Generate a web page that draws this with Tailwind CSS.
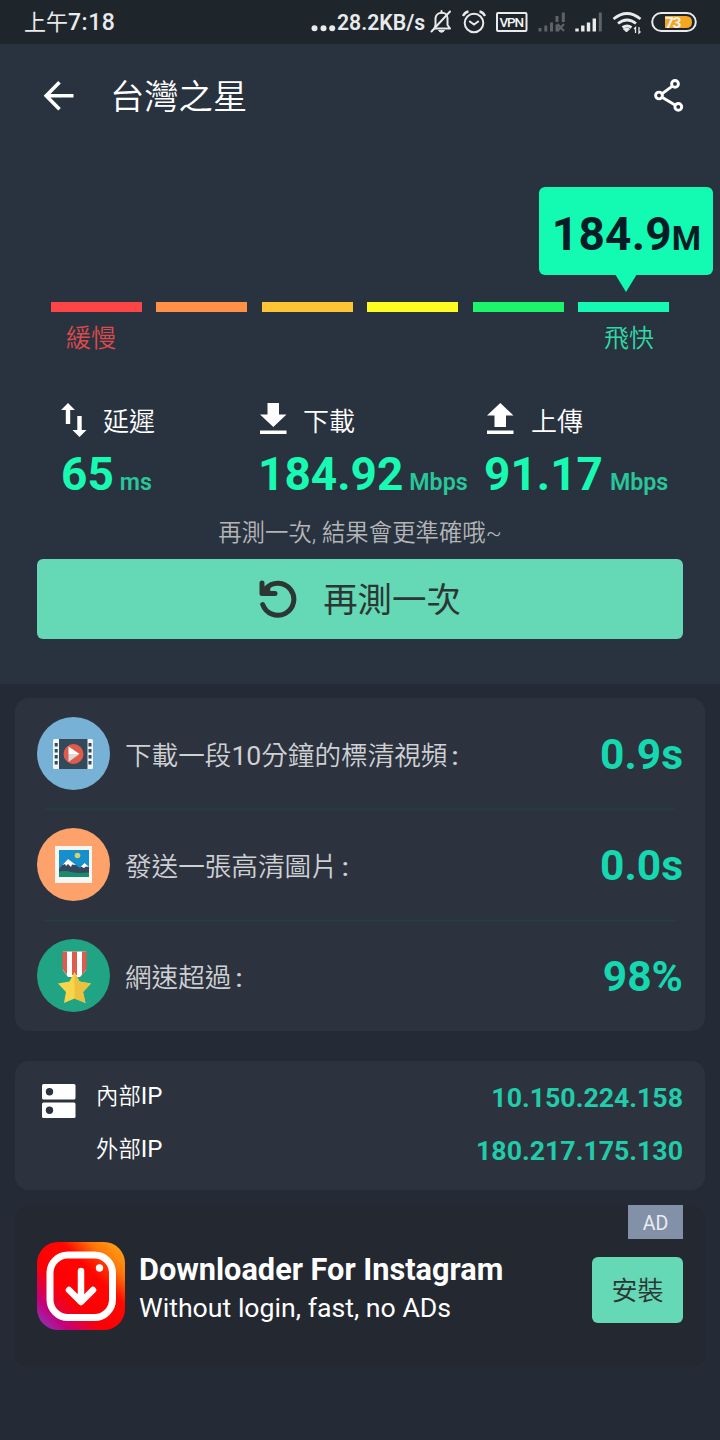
<!DOCTYPE html>
<html lang="zh-Hant">
<head>
<meta charset="utf-8">
<meta name="viewport" content="width=720">
<title>台灣之星</title>
<script src="https://cdn.jsdelivr.net/npm/@tailwindcss/browser@4"></script>
</head>
<body class="bg-[#252b36] font-['Roboto','Noto_Sans_CJK_TC',sans-serif] text-white">
<div class="flex h-[1440px] w-[720px] flex-col overflow-hidden whitespace-nowrap bg-[#252b36]">

  <!-- status bar -->
  <header class="flex h-11 shrink-0 items-center bg-[#1e252b] pl-6 text-[#e8eaeb]">
    <div class="flex h-11 items-center pt-[2px] text-[23px] font-medium leading-[44px]"><span class="text-[22px] font-normal">上午</span><span class="tracking-[0.5px]">7:18</span></div>
    <svg class="ml-auto" width="26" height="44" viewBox="0 0 26 44" fill="#e8eaeb"><circle cx="3.500" cy="28.300" r="3"/><circle cx="12.500" cy="28.300" r="3"/><circle cx="21.200" cy="28.300" r="3"/></svg>
    <span class="w-[88px] pt-[2px] text-[21.200px] font-[600] leading-[44px]">28.2KB/s</span>
    <svg width="295" height="44" viewBox="425 0 295 44" fill="none" stroke="#e8eaeb" stroke-width="2">
      <path d="M434.500 28.500h15.500l-2.500-3.500v-7c0-7-11-7-12 0v7z" stroke-linejoin="round"/><path d="M441.500 11v2M431.500 31.500l18.500-20" stroke-linecap="round"/><path d="M438.500 30.500h6q-3 3.500-6 0z" fill="#e8eaeb" stroke-width="1"/>
      <circle cx="474" cy="23" r="9.300"/><path d="M469.800 21.500l4.200 3 4.200-3" stroke-linecap="round"/><path d="M463 16q2-4 5.500-4.500M485 16q-2-4-5.500-4.500" stroke-width="2.300"/>
      <rect x="497" y="13" width="29.500" height="18" rx="1"/>
      <g stroke="#5d6367" stroke-width="3"><path d="M540 31.500v-3.500M545.800 31.500v-6M551.500 31.500v-9M557 31.500v-7M557 22v-6M563.300 22v-9.500"/><path d="M557.500 24l6.500 7M564 24l-6.500 7" stroke-width="2"/></g>
      <path d="M577 31.500v-3M582.800 31.500v-6M588.500 31.500v-9M594.300 31.500v-13" stroke-width="3.400"/><path d="M600.300 31.500v-19" stroke="#5d6367" stroke-width="3"/>
      <g stroke-width="2.800"><path d="M613.500 19q13.500-11 27 0M618 23.500q9-7 18 0M622.500 27.500q4.500-3 9 0"/></g><path d="M623.500 29q3-2 6 0l-3 3z" fill="#e8eaeb" stroke-width="1"/><path d="M635.500 33v-5.500l-1.500 1.500M639 27v6l1.500-1.500" stroke-width="1.300"/>
      <rect x="652.200" y="13" width="43.600" height="18" rx="9"/><path d="M665 16h21q6 0 6 6t-6 6h-21z" fill="#f5a623" stroke="none"/>
      <g fill="#f4f4f4" stroke="none" font-family="Roboto" font-weight="700"><text x="499.500" y="27" font-size="13.500" textLength="24.500" font-weight="500">VPN</text><text x="665" y="27.500" font-size="15.500" textLength="16.500">73</text></g>
    </svg>
  </header>

  <!-- speed result -->
  <section class="flex h-[640px] shrink-0 flex-col bg-[#29333f]">
    <div class="flex h-[104px] shrink-0 items-center pl-[43px] pr-[34px]">
      <svg width="32" height="32" viewBox="0 0 32 32" fill="none" stroke="#fff" stroke-width="3.600"><path d="M30.500 15.700H3.500M16.500 2.200L3.200 15.700l13.300 13.500"/></svg>
      <h1 class="ml-[35px] pt-[2px] text-[34.300px] font-[350] leading-[50px]">台灣之星</h1>
      <svg class="ml-auto" width="32" height="34" viewBox="0 0 32 34" fill="none" stroke="#fff" stroke-width="2.900"><path d="M8.500 14.300l9.500-7M8.500 18.500l12.500 7.500"/><circle cx="5" cy="16.500" r="3.400"/><circle cx="21" cy="4.900" r="3.400"/><circle cx="24.300" cy="27.900" r="3.400"/></svg>
    </div>

    <div class="relative mt-[154px] shrink-0 px-[51px]">
      <div class="absolute right-[7px] top-[-115px] flex h-[88px] w-[174px] items-baseline justify-center rounded-[6px] bg-[#13fbb2] pl-px font-bold text-[#061c26]">
        <span class="text-[46px] leading-[94px] tracking-[0.200px]">184.9</span><span class="text-[33.500px] leading-[94px]">M</span>
        <svg class="absolute left-[76px] top-[87px]" width="22" height="18" viewBox="0 0 22 18"><path d="M0 0h22l-11 18z" fill="#13fbb2"/></svg>
      </div>
      <div class="flex h-[10px] gap-[14.400px]">
        <i class="flex-1 bg-[#fe4545]"></i><i class="flex-1 bg-[#fe9145]"></i><i class="flex-1 bg-[#fdc436]"></i><i class="flex-1 bg-[#fdfb22]"></i><i class="flex-1 bg-[#1ef46b]"></i><i class="flex-1 bg-[#15fab2]"></i>
      </div>
      <div class="mt-[9px] flex h-[36px] justify-between px-[15px] text-[25px] font-[350] leading-[36px]"><span class="text-[#dc4b4c]">緩慢</span><span class="text-[#30d9a6]">飛快</span></div>
    </div>

    <div class="mt-[44px] flex h-[100px] shrink-0 pl-[61px]">
      <div class="w-[198px]">
        <div class="flex h-10 items-center"><svg class="-mt-[3px]" width="26" height="34" viewBox="0 0 26 34" fill="#fff"><path d="M7 0l7 7H9.200v14H4.800V7H0zM18.500 34l-7-7h4.800V13h4.400v14h4.800z"/></svg><span class="ml-4 pt-[2px] text-[26px] font-[350] leading-10">延遲</span></div>
        <div class="flex items-baseline font-bold leading-[66px]"><span class="text-[46px] text-[#18fab2]">65</span><span class="ml-[6px] text-[23.200px] font-[600] text-[#29c69a]">ms</span></div>
      </div>
      <div class="w-[226px]">
        <div class="flex h-10 items-center"><svg class="-mt-1 ml-[1px]" width="27" height="32" viewBox="0 0 27 32" fill="#fff"><path d="M7.500 0h11.500v11.500h7.500L13.300 24 0 11.500h7.500zM0 27.500h26.500V31H0z"/></svg><span class="ml-4 pt-[2px] text-[26px] font-[350] leading-10">下載</span></div>
        <div class="-ml-px flex items-baseline font-bold leading-[66px]"><span class="text-[46px] text-[#18fab2]">184.92</span><span class="ml-[6px] text-[23.200px] font-[600] text-[#29c69a]">Mbps</span></div>
      </div>
      <div>
        <div class="flex h-10 items-center"><svg class="-mt-1 ml-[2px]" width="27" height="32" viewBox="0 0 27 32" fill="#fff"><path d="M13.300 0L26.500 12.500H19V24H7.500V12.500H0zM0 27.500h26.500V31H0z"/></svg><span class="ml-[17px] pt-[2px] text-[26px] font-[350] leading-10">上傳</span></div>
        <div class="-ml-px flex items-baseline font-bold leading-[66px]"><span class="text-[46px] text-[#18fab2]">91.17</span><span class="ml-[7px] text-[23.200px] font-[600] text-[#29c69a]">Mbps</span></div>
      </div>
    </div>

    <p class="mt-[14px] h-[36px] text-center text-[23.400px] font-[350] leading-[37px] text-[#b4b5b8]">再測一次, 結果會更準確哦~</p>
    <button class="mx-[37px] mt-2 flex h-20 shrink-0 items-center justify-center rounded-[6px] bg-[#65d9b6] text-[#2c3733]">
      <svg class="-mt-px" width="38" height="38" viewBox="0 0 38 38" fill="none" stroke="#2c3733" stroke-width="5" stroke-linecap="round" stroke-linejoin="round"><path d="M3.700 24.500A16 16 0 1 0 7 8.500"/><path d="M3 3v10.500h13" /><path d="M3 13.500V7l3.500 1.500L10 7v6.500z" fill="#2c3733" stroke-width="2.500"/></svg>
      <span class="ml-[26px] pt-[2px] text-[34.400px] font-normal leading-[50px]">再測一次</span>
    </button>
  </section>

  <!-- practical results -->
  <section class="mx-[15px] mt-[14px] flex h-[333px] shrink-0 flex-col rounded-[14px] bg-[#2c333e] px-[22px] text-[26.600px] font-[350] text-[#cfd0d4]">
    <div class="flex h-[111px] items-center">
      <svg width="73" height="73" viewBox="0 0 73 73"><circle cx="36.500" cy="36.500" r="36.500" fill="#77b1d6"/><path d="M22 22h29v30H22z" fill="#324a5a"/><path d="M17.500 22H22v30h-4.500q-1.500 0-1.500-1.500v-27q0-1.500 1.500-1.500zM50.500 22h4q1.500 0 1.500 1.500v27q0 1.500-1.500 1.500h-4z" fill="#f1f5f7"/><path d="M19.200 26v22.500M53 26v22.500" stroke="#324a5a" stroke-width="3" stroke-dasharray="3.500 2.500"/><circle cx="36.500" cy="37" r="10" fill="#e05a4d"/><path d="M31.500 29.500L42.500 37H31.500z" fill="#fff"/><path d="M31.500 37h11l-11 8z" fill="#dadada"/></svg>
      <span class="ml-[15px] pt-[5px] leading-[40px]">下載一段<span class="font-normal">10</span>分鐘的標清視頻<span class="ml-1 font-medium">:</span></span>
      <b class="ml-auto pt-[2px] text-[42.500px] font-bold leading-[60px] text-[#15d7b0]">0.9s</b>
    </div>
    <div class="mx-[7px] -mt-px h-[2px] -mb-px shrink-0 bg-[#213b47]"></div>
    <div class="flex h-[111px] items-center">
      <svg width="73" height="73" viewBox="0 0 73 73"><circle cx="36.500" cy="36.500" r="36.500" fill="#fda26b"/><path d="M18 18h37v37H18z" fill="#f7f6f2"/><path d="M22 22h30v27H22z" fill="#168fcd"/><circle cx="40.500" cy="27.500" r="2.800" fill="#d9cf6e"/><path d="M22 41l9-10 6 5 6 4 4-4 5 3v8H22z" fill="#34495e"/><path d="M25.500 37l5.500-6 8 6-4-.5-1 2.500-3-3-2 2-1-2zM44 38.500l3.500-3.500 4.500 4-3-.5-2 1.500z" fill="#fff"/><path d="M22 43.500q7-1 12 .5t18 .5V49H22z" fill="#168e6e"/></svg>
      <span class="ml-[15px] pt-[5px] leading-[40px]">發送一張高清圖片<span class="ml-1 font-medium">:</span></span>
      <b class="ml-auto pt-[2px] text-[42.500px] font-bold leading-[60px] text-[#15d7b0]">0.0s</b>
    </div>
    <div class="mx-[7px] -mb-px h-px shrink-0 bg-[#1e414d]"></div>
    <div class="flex h-[111px] items-center">
      <svg width="73" height="73" viewBox="0 0 73 73"><circle cx="36.500" cy="36.500" r="36.500" fill="#21a484"/><path d="M26 12.500h23V31l-6 7H31l-5-7z" fill="#fff"/><path d="M25.500 12.500H30V36l-4.500-6zM35 12.500h5V36h-5zM45 12.500h4.500V30L45 36z" fill="#de5b4e"/><path d="M37.500 33l5 9.500 11.500 2-8 8.500 2.500 11-11-4.500-10.500 4.500 2-11-8-8.500 11.500-2z" fill="#f9d649"/><path d="M37.500 33l5 9.500 11.500 2-8 8.500 2.500 11-11-4.500z" fill="#edc140"/></svg>
      <span class="ml-[15px] pt-[5px] leading-[40px]">網速超過<span class="ml-1 font-medium">:</span></span>
      <b class="ml-auto pt-[3px] text-[42.500px] font-bold leading-[60px] text-[#15d7b0]">98%</b>
    </div>
  </section>

  <!-- IP addresses -->
  <section class="mx-[15px] mt-[30px] flex h-[129px] shrink-0 rounded-[14px] bg-[#2c333e] px-[22px]">
    <svg class="ml-[5px] mt-[23px]" width="34" height="35" viewBox="0 0 34 35"><rect width="33.500" height="15.500" rx="1.500" fill="#fff"/><rect y="18.500" width="33.500" height="15.500" rx="1.500" fill="#fff"/><circle cx="7.500" cy="7.800" r="3.700" fill="#2c333e"/><circle cx="7.500" cy="26.300" r="3.700" fill="#2c333e"/></svg>
    <div class="ml-5 mt-[9px] flex flex-col text-[22.400px] font-[350] leading-[53px]"><span>內部<span class="text-[24px] font-normal">IP</span></span><span>外部<span class="text-[24px] font-normal">IP</span></span></div>
    <div class="ml-auto mt-[11px] flex flex-col text-right text-[26.700px] font-bold leading-[53px] text-[#22cbaa]"><span>10.150.224.158</span><span>180.217.175.130</span></div>
  </section>

  <!-- advertisement -->
  <section class="relative mx-[15px] mt-[15px] flex h-[162px] shrink-0 items-center rounded-[14px] bg-[#242831] px-[22px]">
    <span class="absolute right-[22px] top-0 flex h-[34px] w-[55px] items-center justify-center bg-[#8291a8] pt-[3px] text-[19.500px] leading-[34px] text-[#e9ecf1]">AD</span>
    <svg width="88" height="88" viewBox="0 0 88 88"><defs><linearGradient id="g" x1="0" y1="1" x2="1" y2="0"><stop offset=".04" stop-color="#8a36b8"/><stop offset=".18" stop-color="#c4007c"/><stop offset=".37" stop-color="#fb0008"/><stop offset=".64" stop-color="#ff0800"/><stop offset=".8" stop-color="#ff7608"/><stop offset="1" stop-color="#ffb01c"/></linearGradient></defs><rect width="88" height="88" rx="21" fill="url(#g)"/><rect x="13" y="13" width="62.500" height="62.500" rx="18" fill="#ff0303" fill-opacity=".4" stroke="#fff" stroke-width="7"/><path d="M44 29v30M32 48l12 12 12-12" fill="none" stroke="#fff" stroke-width="6.500" stroke-linecap="round" stroke-linejoin="round"/><circle cx="62.500" cy="26" r="3.700" fill="#fff"/></svg>
    <div class="ml-[14px] mt-[7px] flex flex-col"><b class="text-[30.700px] font-bold leading-[38px]">Downloader For Instagram</b><span class="text-[26.700px] leading-[39px]">Without login, fast, no ADs</span></div>
    <button class="ml-auto mt-[7px] h-[66px] w-[91px] rounded-[6px] bg-[#65d9b6] pt-[2px] text-[26px] font-[350] leading-[64px] text-[#2c3733]">安裝</button>
  </section>
</div>
</body>
</html>
